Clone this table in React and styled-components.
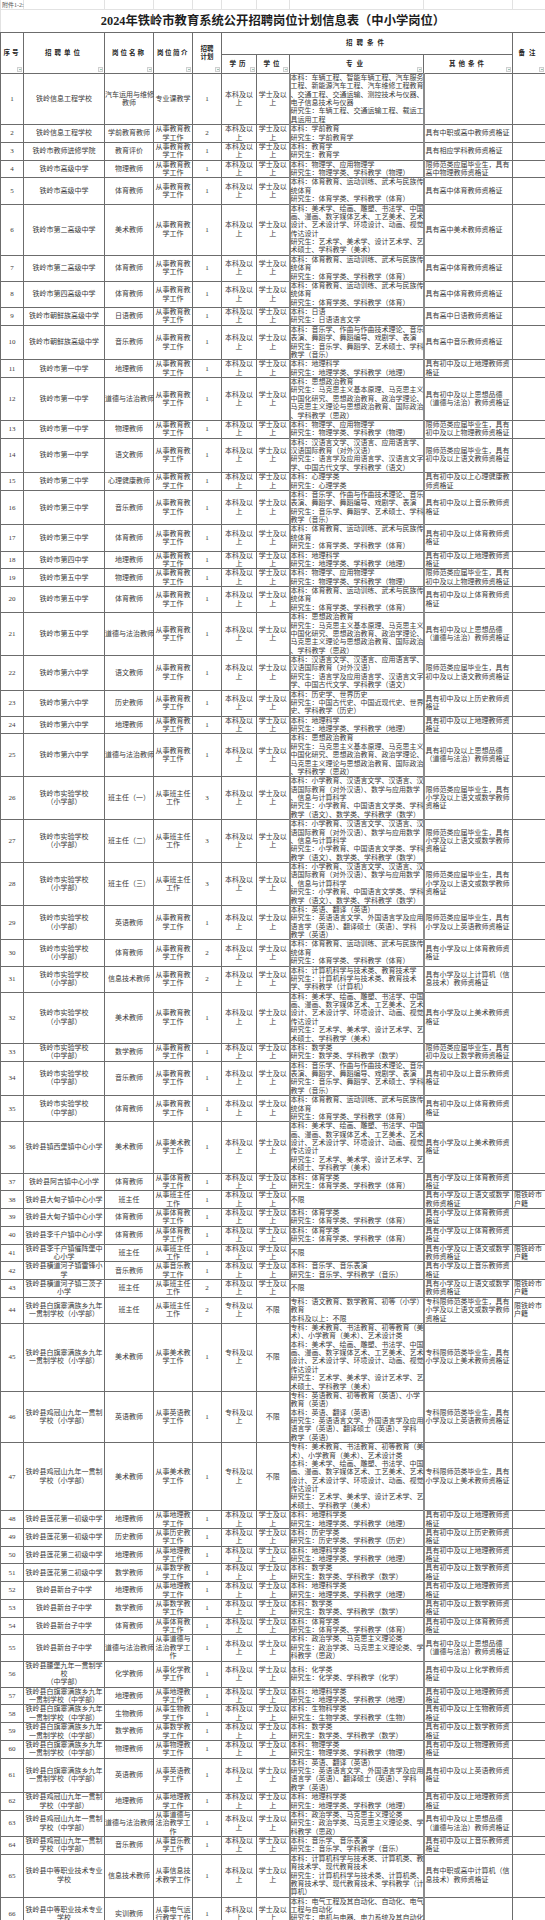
import React from 'react';
import styled, { createGlobalStyle } from 'styled-components';

const GlobalStyle = createGlobalStyle`
  body {
    margin: 0;
    background: #fff;
    font-family: "Liberation Serif", "Noto Sans CJK SC", serif;
  }
`;

const COLS = [23, 81, 49, 39, 29, 35, 33, 134, 89, 33];
const LINE = 8.38;

const Sheet = styled.table`
  width: 545px;
  border-collapse: collapse;
  table-layout: fixed;
  color: #3a3a3a;
`;

const Col = styled.col`
  width: ${p => p.$w}px;
`;

const GridCell = styled.td`
  width: ${p => p.$w}px;
  height: 9.4px;
  border: 1px solid #e2e2e2;
  border-top: none;
  padding: 0 0 0 1px;
  font-size: 6px;
  line-height: 8px;
  color: #555;
  white-space: nowrap;
  vertical-align: middle;
`;

const TitleCell = styled.td`
  height: 21.6px;
  border: 1px solid #e2e2e2;
  border-bottom: 1px solid #6c6c6c;
  text-align: center;
  vertical-align: middle;
  font-size: 12.3px;
  font-weight: 700;
  line-height: 14px;
  color: #1e1e1e;
  padding: 0;
`;

const Th = styled.th`
  position: relative;
  height: ${p => p.$h || 0}px;
  border: 1px solid #6c6c6c;
  padding: 0;
  font-size: 6.5px;
  line-height: 8.4px;
  font-weight: 700;
  letter-spacing: ${p => p.$ls || 0}px;
  white-space: pre;
  text-align: center;
  vertical-align: middle;
  color: #262626;
`;

const Filter = styled.span`
  position: absolute;
  right: 1px;
  bottom: 1px;
  width: 3px;
  height: 3px;
  border: 1px solid #cfcfcf;
  background: #f6f6f6;

  &::after {
    content: '';
    position: absolute;
    left: 0.5px;
    top: 1px;
    border-left: 1px solid transparent;
    border-right: 1px solid transparent;
    border-top: 1.2px solid #3f8f73;
  }
`;

const Td = styled.td`
  border: 1px solid #6c6c6c;
  padding: 0 0 0 ${p => (p.$left ? 1 : 0)}px;
  font-size: 7px;
  line-height: ${LINE}px;
  text-align: ${p => (p.$left ? 'left' : 'center')};
  vertical-align: middle;
  white-space: pre;
`;

// 专业列两侧是较粗的灰线
const MajorTd = styled.td`
  border: 1px solid #6c6c6c;
  border-left: 2px solid #8c8c8c;
  border-right: 2px solid #8c8c8c;
  padding: 0;
  font-size: 7px;
  line-height: ${LINE}px;
  text-align: left;
  vertical-align: middle;
  white-space: pre;
`;

const wrap = (s, n) => {
  const out = [];
  let i = 0;
  while (i < s.length) {
    let chunk = s.slice(i, i + n);
    if (chunk.length > 1 && chunk.endsWith('（')) chunk = chunk.slice(0, -1);
    out.push(chunk);
    i += chunk.length;
  }
  return out.join('\n');
};

// 常用文字
const X = '从事教育教\n学工作';
const BZ = '从事班主任\n工作';
const ed = s => `从事${s}教\n学工作`;
const BK = '本科及以\n上';
const XS = '学士及以\n上';
const ZK = '专科及以\n上';
const BX = '不限';

const TY = '本科：体育教育、运动训练、武术与民族传\n统体育\n研究生：体育学类、学科教学（体育）';
const TYL = '本科：体育学类\n研究生：体育学类、学科教学（体育）';
const MS = '本科：美术学、绘画、雕塑、书法学、中国\n画、漫画、数字媒体艺术、工艺美术、艺术\n设计、艺术设计学、环境设计、动画、视觉\n传达设计\n研究生：艺术学、美术学、设计艺术学、艺\n术硕士、学科教学（美术）';
const YY = '本科：音乐学、作曲与作曲技术理论、音乐\n表演、舞蹈学、舞蹈编导、戏剧学、表演\n研究生：音乐学、舞蹈学、艺术硕士、学科\n教学（音乐）';
const YYL = '本科：音乐学、音乐表演\n研究生：音乐学、学科教学（音乐）';
const DL = '本科：地理科学\n研究生：地理学类、学科教学（地理）';
const DLL = '本科：地理科学类\n研究生：地理学类、学科教学（地理）';
const SZ = '本科：思想政治教育\n研究生：马克思主义基本原理、马克思主义\n中国化研究、思想政治教育、政治学理论、\n马克思主义理论与思想政治教育、国际政治\n、学科教学（思政）';
const SZL = '本科：政治学类、马克思主义理论类\n研究生：政治学类、马克思主义理论类、学\n科教学（思政）';
const WL = '本科：物理学、应用物理学\n研究生：物理学类、学科教学（物理）';
const WLL = '本科：物理学类\n研究生：物理学类、学科教学（物理）';
const YW = '本科：汉语言文学、汉语言、应用语言学、\n汉语国际教育（对外汉语）\n研究生：语言学及应用语言学、汉语言文字\n学、中国古代文学、学科教学（语文）';
const XX = '本科：小学教育、汉语言文学、汉语言、汉\n语国际教育（对外汉语）、数学与应用数学\n、信息与计算科学\n研究生：小学教育、中国语言文学类、学科\n教学（语文）、数学类、学科教学（数学）';
const EN = '本科：英语、翻译（英语）\n研究生：英语语言文学、外国语言学及应用\n语言学（英语）、翻译硕士（英语）、学科\n教学（英语）';
const SX = '本科：数学类\n研究生：数学类、学科教学（数学）';
const JSJ = '本科：计算机科学与技术类、教育技术学\n研究生：计算机科学与技术类、教育技术\n学、学科教学（计算机）';
const ZMS = '专科：美术教育、书法教育、初等教育（美\n术）、小学教育（美术）、艺术设计类\n' + MS;
const ZEN = '专科：英语教育、初等教育（英语）、小学\n教育（英语）\n' + EN;

const SY_X = '铁岭市实验学校\n（小学部）';
const SY_Z = '铁岭市实验学校\n（中学部）';
const BQ_X = '铁岭县白旗寨满族乡九年\n一贯制学校（小学部）';
const BQ_Z = '铁岭县白旗寨满族乡九年\n一贯制学校（中学部）';
const JG_X = '铁岭县鸡冠山九年一贯制\n学校（小学部）';
const JG_Z = '铁岭县鸡冠山九年一贯制\n学校（中学部）';
const ZZ = '铁岭县中等职业技术专业\n学校';

const GZ = s => `具有高中${s}教师资格证`;
const CZ = s => `具有初中及以上${s}教师资格证`;
const XZ = s => `具有小学及以上${s}教师资格证`;
const SF = s => `限师范类应届毕业生，具有${s}教师资格证`;
const PD = '具有初中及以上思想品德（道德与法治）教师资格证';
const HJ = '限铁岭市\n户籍';

const r = (no, unit, post, intro, plan, major, other, more = {}) => ({
  no, unit, post, intro, plan, major, other,
  edu: more.edu || BK,
  deg: more.deg || XS,
  note: more.note || '',
});
const zk = { edu: ZK, deg: BX };

const ROWS = [
  r(1, '铁岭信息工程学校', '汽车运用与维修\n教师', '专业课教学', 1, '本科：车辆工程、智能车辆工程、汽车服务\n工程、新能源汽车工程、汽车维修工程教育\n、交通工程、交通运输、测控技术与仪器、\n电子信息技术与仪器\n研究生：车辆工程、交通运输工程、载运工\n具运用工程', ''),
  r(2, '铁岭信息工程学校', '学前教育教师', X, 2, '本科：学前教育\n研究生：学前教育学', '具有中职或高中教师资格证'),
  r(3, '铁岭市教师进修学院', '教育评价', X, 1, '本科：教育学\n研究生：教育学', '具有相应学科教师资格证'),
  r(4, '铁岭市高级中学', '物理教师', X, 1, WL, SF('高中物理')),
  r(5, '铁岭市高级中学', '体育教师', X, 1, TY, GZ('体育')),
  r(6, '铁岭市第二高级中学', '美术教师', X, 1, MS, GZ('美术')),
  r(7, '铁岭市第二高级中学', '体育教师', X, 1, TY, GZ('体育')),
  r(8, '铁岭市第四高级中学', '体育教师', X, 1, TY, GZ('体育')),
  r(9, '铁岭市朝鲜族高级中学', '日语教师', X, 1, '本科：日语\n研究生：日语语言文学', GZ('日语')),
  r(10, '铁岭市朝鲜族高级中学', '音乐教师', X, 1, YY, GZ('音乐')),
  r(11, '铁岭市第一中学', '地理教师', X, 1, DL, CZ('地理')),
  r(12, '铁岭市第一中学', '道德与法治教师', X, 1, SZ, PD),
  r(13, '铁岭市第一中学', '物理教师', X, 1, WL, SF('初中及以上物理')),
  r(14, '铁岭市第一中学', '语文教师', X, 1, YW, SF('初中及以上语文')),
  r(15, '铁岭市第二中学', '心理健康教师', X, 1, '本科：心理学类\n研究生：心理学类', CZ('心理健康')),
  r(16, '铁岭市第三中学', '音乐教师', X, 1, YY, CZ('音乐')),
  r(17, '铁岭市第三中学', '体育教师', X, 1, TY, CZ('体育')),
  r(18, '铁岭市第四中学', '地理教师', X, 1, DL, CZ('地理')),
  r(19, '铁岭市第五中学', '物理教师', X, 1, WL, SF('初中及以上物理')),
  r(20, '铁岭市第五中学', '体育教师', X, 1, TY, CZ('体育')),
  r(21, '铁岭市第五中学', '道德与法治教师', X, 1, SZ, PD),
  r(22, '铁岭市第六中学', '语文教师', X, 1, YW, SF('初中及以上语文')),
  r(23, '铁岭市第六中学', '历史教师', X, 1, '本科：历史学、世界历史\n研究生：中国古代史、中国近现代史、世界\n史、学科教学（历史）', CZ('历史')),
  r(24, '铁岭市第六中学', '地理教师', X, 1, DL, CZ('地理')),
  r(25, '铁岭市第六中学', '道德与法治教师', X, 1, SZ, PD),
  r(26, SY_X, '班主任（一）', BZ, 3, XX, SF('小学及以上语文或数学')),
  r(27, SY_X, '班主任（二）', BZ, 3, XX, SF('小学及以上语文或数学')),
  r(28, SY_X, '班主任（三）', BZ, 3, XX, SF('小学及以上语文或数学')),
  r(29, SY_X, '英语教师', X, 1, EN, SF('小学及以上英语')),
  r(30, SY_X, '体育教师', X, 2, TY, XZ('体育')),
  r(31, SY_X, '信息技术教师', X, 2, JSJ, XZ('计算机（信息技术）')),
  r(32, SY_X, '美术教师', X, 1, MS, XZ('美术')),
  r(33, SY_Z, '数学教师', X, 1, SX, SF('初中及以上数学')),
  r(34, SY_Z, '音乐教师', X, 1, YY, CZ('音乐')),
  r(35, SY_Z, '体育教师', X, 1, TY, CZ('体育')),
  r(36, '铁岭县镇西堡镇中心小学', '美术教师', ed('美术'), 1, MS, XZ('美术')),
  r(37, '铁岭县阿吉镇中心小学', '体育教师', ed('体育'), 1, TYL, XZ('体育')),
  r(38, '铁岭县大甸子镇中心小学', '班主任', BZ, 1, '不限', XZ('语文或数学'), { note: HJ }),
  r(39, '铁岭县大甸子镇中心小学', '体育教师', ed('体育'), 1, TYL, XZ('体育')),
  r(40, '铁岭县李千户镇中心小学', '体育教师', ed('体育'), 1, TYL, XZ('体育')),
  r(41, '铁岭县李千户镇催阵堡中\n心小学', '班主任', BZ, 1, '不限', XZ('语文或数学'), { note: HJ }),
  r(42, '铁岭县横道河子镇雷锋小\n学', '音乐教师', ed('音乐'), 1, YYL, XZ('音乐')),
  r(43, '铁岭县横道河子镇三茨子\n小学', '班主任', BZ, 2, '不限', XZ('语文或数学'), { note: HJ }),
  r(44, BQ_X, '班主任', BZ, 2, '专科：语文教育、数学教育、初等（小学）\n教育\n本科及以上：不限', '专科限师范类毕业生，具有小学及以上语文或数学教师资格证', { ...zk, note: HJ }),
  r(45, BQ_X, '美术教师', ed('美术'), 1, ZMS, '专科限师范类毕业生，具有小学及以上美术教师资格证', zk),
  r(46, JG_X, '英语教师', ed('英语'), 1, ZEN, '专科限师范类毕业生，具有小学及以上英语教师资格证', zk),
  r(47, JG_X, '美术教师', ed('美术'), 1, ZMS, '专科限师范类毕业生，具有小学及以上美术教师资格证', zk),
  r(48, '铁岭县莲花第一初级中学', '地理教师', ed('地理'), 1, DLL, CZ('地理')),
  r(49, '铁岭县莲花第一初级中学', '历史教师', ed('历史'), 1, '本科：历史学类\n研究生：历史学类、学科教学（历史）', CZ('历史')),
  r(50, '铁岭县莲花第二初级中学', '地理教师', ed('地理'), 1, DLL, CZ('地理')),
  r(51, '铁岭县莲花第二初级中学', '数学教师', ed('数学'), 1, SX, CZ('数学')),
  r(52, '铁岭县新台子中学', '地理教师', ed('地理'), 1, DLL, CZ('地理')),
  r(53, '铁岭县新台子中学', '数学教师', ed('数学'), 1, SX, CZ('数学')),
  r(54, '铁岭县新台子中学', '体育教师', ed('体育'), 1, TYL, CZ('体育')),
  r(55, '铁岭县新台子中学', '道德与法治教师', '从事道德与\n法治教学工\n作', 1, SZL, PD),
  r(56, '铁岭县腰堡九年一贯制学\n校\n（中学部）', '化学教师', ed('化学'), 1, '本科：化学类\n研究生：化学类、学科教学（化学）', CZ('化学')),
  r(57, BQ_Z, '地理教师', ed('地理'), 1, DLL, CZ('地理')),
  r(58, BQ_Z, '生物教师', ed('生物'), 1, '本科：生物科学类\n研究生：生物学类、学科教学（生物）', CZ('生物')),
  r(59, BQ_Z, '数学教师', ed('数学'), 1, SX, CZ('数学')),
  r(60, BQ_Z, '物理教师', ed('物理'), 1, WLL, CZ('物理')),
  r(61, BQ_Z, '英语教师', ed('英语'), 1, EN, CZ('英语')),
  r(62, JG_Z, '地理教师', ed('地理'), 1, DLL, CZ('地理')),
  r(63, JG_Z, '道德与法治教师', '从事道德与\n法治教学工\n作', 1, SZL, PD),
  r(64, JG_Z, '音乐教师', ed('音乐'), 1, YYL, CZ('音乐')),
  r(65, ZZ, '信息技术教师', '从事信息技\n术教学工作', 1, '本科：计算机科学与技术类、计算机类、教\n育技术学、现代教育技术\n研究生：计算机科学与技术类、计算机类、\n教育技术学、现代教育技术、学科教学（计\n算机）', '具有中职或高中计算机（信息技术）教师资格证'),
  r(66, ZZ, '实训教师', '从事电气运\n行教学工作', 1, '本科：电气工程及其自动化、自动化、电气\n工程与自动化\n研究生：电机与电器、电力系统及其自动化\n、电力电子与电力传动、高电压与绝缘技术', ''),
];

const HeadCell = ({ children, ls, h, filter = true, ...rest }) => (
  <Th $ls={ls} $h={h} {...rest}>
    {children}
    {filter && <Filter />}
  </Th>
);

export default function App() {
  return (
    <>
      <GlobalStyle />
      <Sheet>
        <colgroup>
          {COLS.map((w, i) => <Col key={i} $w={w} />)}
        </colgroup>
        <thead>
          <tr>
            {COLS.map((w, i) => (
              <GridCell key={i} $w={w}>{i === 0 ? '附件1-2:' : ''}</GridCell>
            ))}
          </tr>
          <tr>
            <TitleCell colSpan={10}>2024年铁岭市教育系统公开招聘岗位计划信息表（中小学岗位）</TitleCell>
          </tr>
          <tr>
            <HeadCell rowSpan={2} ls={2}>序号</HeadCell>
            <HeadCell rowSpan={2} ls={3}>招聘单位</HeadCell>
            <HeadCell rowSpan={2} ls={2}>岗位名称</HeadCell>
            <HeadCell rowSpan={2} ls={1.5}>岗位简介</HeadCell>
            <HeadCell rowSpan={2}>{'招聘\n计划'}</HeadCell>
            <HeadCell colSpan={4} ls={4} h={21} filter={false}>招聘条件</HeadCell>
            <HeadCell rowSpan={2} ls={4}>备注</HeadCell>
          </tr>
          <tr>
            <HeadCell ls={3} h={18}>学历</HeadCell>
            <HeadCell ls={3} h={18}>学位</HeadCell>
            <HeadCell ls={4} h={18}>专业</HeadCell>
            <HeadCell ls={3} h={18}>其他条件</HeadCell>
          </tr>
        </thead>
        <tbody>
          {ROWS.map(row => (
            <tr key={row.no}>
              <Td>{row.no}</Td>
              <Td>{row.unit}</Td>
              <Td>{row.post}</Td>
              <Td>{row.intro}</Td>
              <Td>{row.plan}</Td>
              <Td>{row.edu}</Td>
              <Td>{row.deg}</Td>
              <MajorTd>{row.major}</MajorTd>
              <Td $left>{wrap(row.other, 12)}</Td>
              <Td $left>{row.note}</Td>
            </tr>
          ))}
        </tbody>
      </Sheet>
    </>
  );
}
